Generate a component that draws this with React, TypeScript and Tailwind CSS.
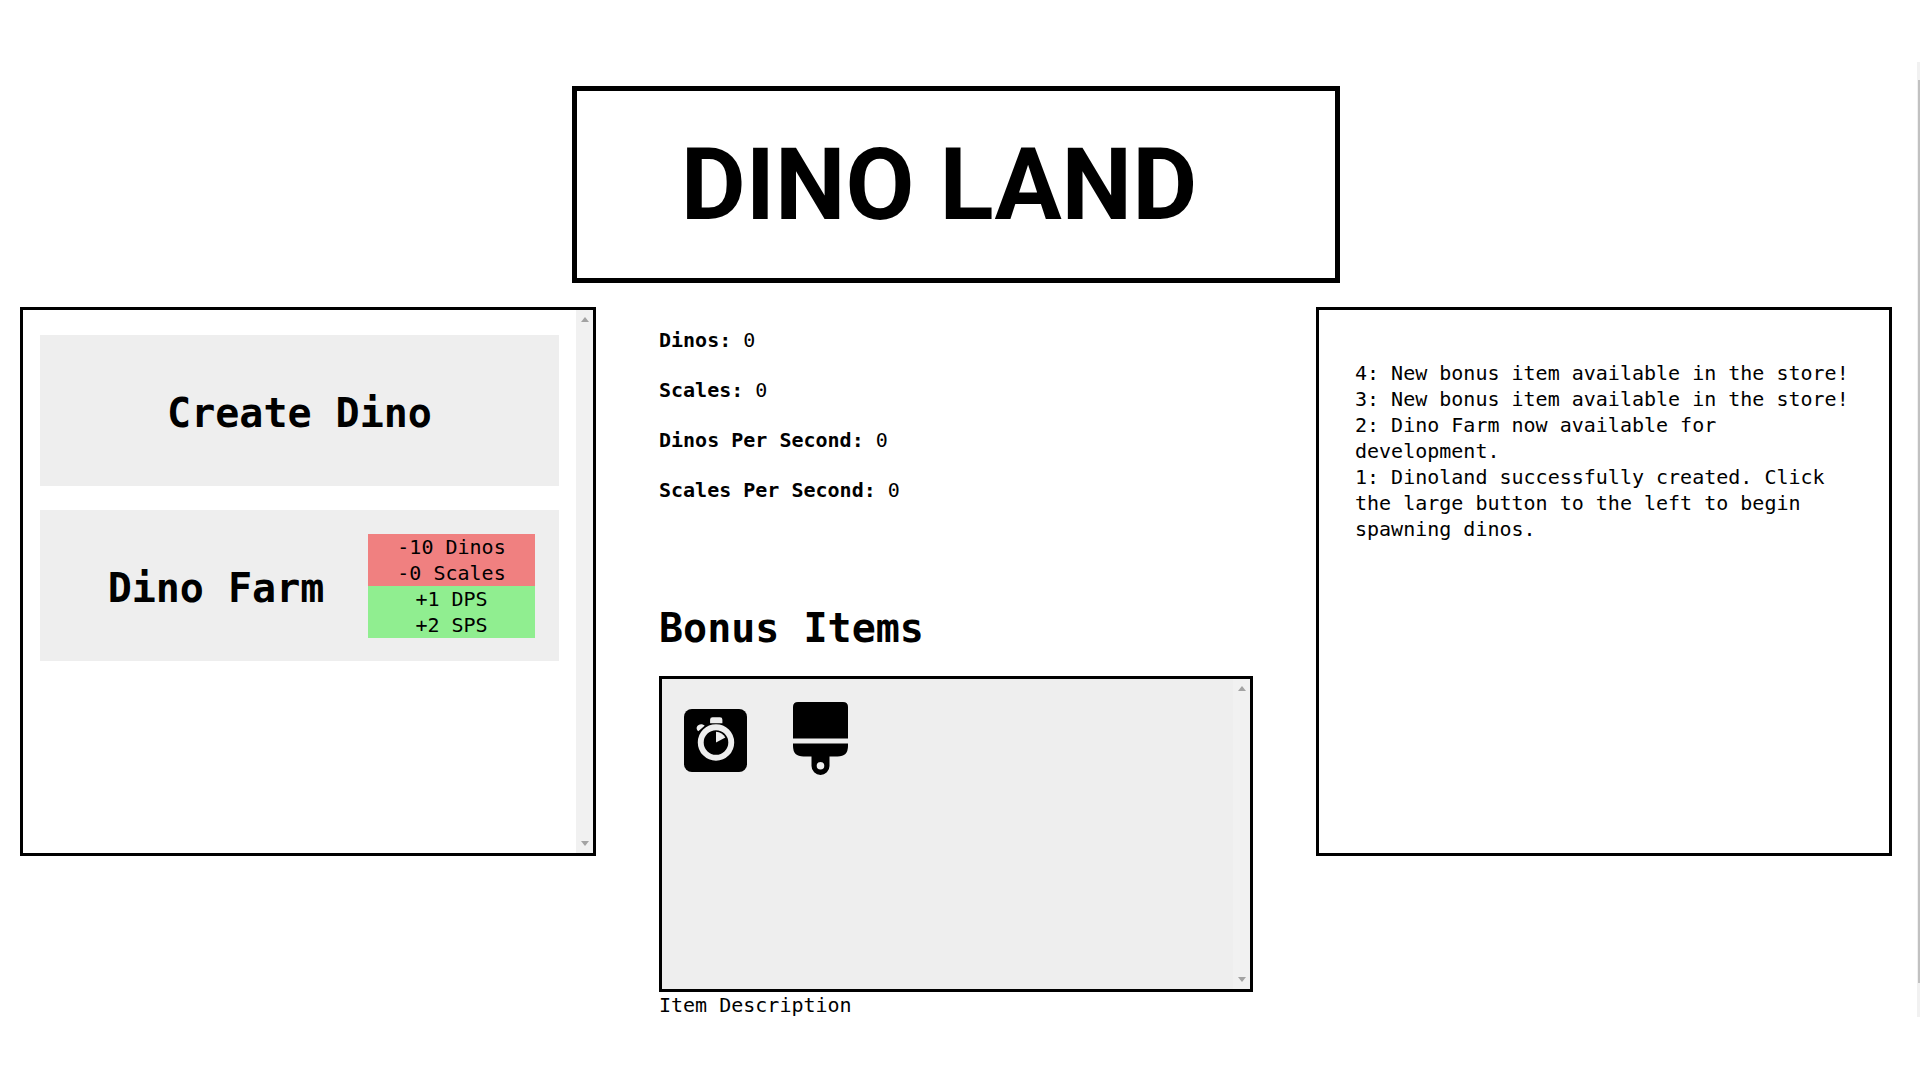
import React from "react";

const stats = [
  { label: "Dinos", value: 0 },
  { label: "Scales", value: 0 },
  { label: "Dinos Per Second", value: 0 },
  { label: "Scales Per Second", value: 0 },
];

const log = [
  "4: New bonus item available in the store!",
  "3: New bonus item available in the store!",
  "2: Dino Farm now available for development.",
  "1: Dinoland successfully created. Click the large button to the left to begin spawning dinos.",
];

function ScrollTrack() {
  return (
    <div aria-hidden="true" className="flex w-[17px] shrink-0 flex-col items-center justify-between bg-[#f1f1f1] py-[7px]">
      <svg width="8" height="5" viewBox="0 0 8 5" fill="#a3a3a3">
        <path d="M4 0 8 5H0z" />
      </svg>
      <svg width="8" height="5" viewBox="0 0 8 5" fill="#a3a3a3">
        <path d="M4 5 0 0h8z" />
      </svg>
    </div>
  );
}

function StopwatchIcon() {
  return (
    <svg width="63" height="63" viewBox="0 0 64 64" aria-hidden="true">
      <rect width="64" height="64" rx="8" fill="#000" />
      <path d="M26.5 14.5V11q0-2.500 2.500-2.500h7.500q2.500 0 2.500 2.500v3.500z" fill="#eee" />
      <path d="M14.500 22.500c-2.500-2-2-4.500 0-6s4.500-1.500 6.500 0.500z" fill="#eee" />
      <circle cx="32.500" cy="34" r="15.500" fill="none" stroke="#eee" strokeWidth="6" />
      <path d="M32.500 34V23q6.500 0.500 9.500 6z" fill="#eee" />
    </svg>
  );
}

function BrushIcon() {
  return (
    <svg width="55" height="73" viewBox="0 0 55 73" aria-hidden="true">
      <path d="M5 0h45q5 0 5 5v31.500H0V5q0-5 5-5z" fill="#000" />
      <path
        fillRule="evenodd"
        d="M0 41.500h55V44q0 10.500-10.500 10.500H36.500V64a9 9 0 0 1-18 0v-9.500H10.500Q0 54.500 0 44zM27.500 60a3.800 3.800 0 1 0 0 7.600a3.800 3.800 0 1 0 0-7.600z"
        fill="#000"
      />
    </svg>
  );
}

export default function App() {
  return (
    <div className="relative min-h-screen bg-white pt-[86px] pr-2 font-['DejaVu_Sans_Mono',monospace] text-xl leading-[26px] text-black">
      <header className="mx-auto flex h-[197px] w-[40vw] items-center justify-center border-5 border-black pr-[34px]">
        <h1 className="font-['Roboto',sans-serif] text-[100px] leading-none font-bold whitespace-nowrap">DINO LAND</h1>
      </header>

      <main className="mt-6 grid grid-cols-[32fr_33fr_32fr] items-start gap-[63px] px-5">
        <section aria-label="Buildings" className="flex h-[549px] border-3 border-black">
          <div className="flex min-w-0 flex-1 flex-col gap-6 px-[17px] pt-[25px]">
            <button className="flex h-[151px] items-center justify-center bg-[#eee] pt-1 text-[40px] leading-[52px] font-bold">
              Create Dino
            </button>
            <button className="flex h-[151px] items-center bg-[#eee] px-6">
              <span className="flex-1 pt-1 text-[40px] leading-[52px] font-bold">Dino Farm</span>
              <span className="flex w-[167px] flex-col">
                <span className="bg-[#f08080]">
                  -10 Dinos
                  <br />
                  -0 Scales
                </span>
                <span className="bg-[#90ee90]">
                  +1 DPS
                  <br />
                  +2 SPS
                </span>
              </span>
            </button>
          </div>
          <ScrollTrack />
        </section>

        <section aria-label="Resources" className="pt-5">
          <dl className="flex flex-col gap-6">
            {stats.map((s) => (
              <div key={s.label} className="flex gap-3">
                <dt className="font-bold">{s.label}:</dt>
                <dd>{s.value}</dd>
              </div>
            ))}
          </dl>
          <h2 className="mt-[99px] mb-[22px] text-[40px] leading-[52px] font-bold">Bonus Items</h2>
          <div className="flex h-[316px] border-3 border-black bg-[#eee]">
            <div className="flex flex-1 items-start gap-[46px] pt-[23px] pl-[22px]">
              <button aria-label="Stopwatch" className="pt-[7px]">
                <StopwatchIcon />
              </button>
              <button aria-label="Paint brush">
                <BrushIcon />
              </button>
            </div>
            <ScrollTrack />
          </div>
          <p>Item Description</p>
        </section>

        <section aria-label="Event log" className="h-[549px] border-3 border-black px-9 pt-[50px]">
          {log.map((line) => (
            <p key={line}>{line}</p>
          ))}
        </section>
      </main>

      <div aria-hidden="true" className="absolute top-[62px] right-0 h-[955px] w-[3px] bg-[#f1f1f1] pt-[18px]">
        <div className="ml-px h-[903px] bg-[#c1c1c1]" />
      </div>
    </div>
  );
}
